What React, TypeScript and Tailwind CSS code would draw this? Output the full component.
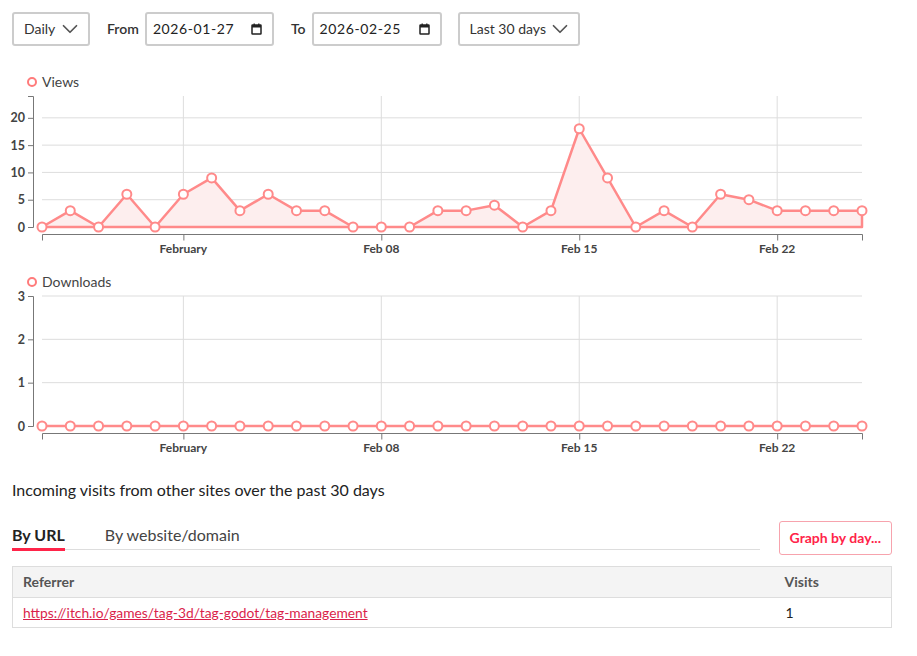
import { ChevronDown } from 'lucide-react';

const views = [0, 3, 0, 6, 0, 6, 9, 3, 6, 3, 3, 0, 0, 0, 3, 3, 4, 0, 3, 18, 9, 0, 3, 0, 6, 5, 3, 3, 3, 3];
const downloads = new Array(30).fill(0);

const xTicks = [
  { i: 5, label: 'February' },
  { i: 12, label: 'Feb 08' },
  { i: 19, label: 'Feb 15' },
  { i: 26, label: 'Feb 22' },
];

const LINE = '#ff8a8a';

function Chart({ data, max, ticks, top, bottom }: { data: number[]; max: number; ticks: number[]; top: number; bottom: number }) {
  const x0 = 42;
  const x1 = 862;
  const step = (x1 - x0) / (data.length - 1);
  const px = (i: number) => x0 + i * step;
  const py = (v: number) => bottom - (v / max) * (bottom - top);
  const axisY = bottom + 7.5;

  const pts = data.map((v, i) => `${px(i)},${py(v)}`);
  const area = `M${x0},${bottom} L${pts.join(' L')} L${x1},${bottom} Z`;

  return (
    <svg width={917} height={176} className="block -mt-[6px]">
      {/* grid */}
      {ticks.map((t) => (
        <line key={t} x1={x0} x2={x1} y1={py(t)} y2={py(t)} stroke="#dddddd" strokeWidth={1} />
      ))}
      {xTicks.map((t) => (
        <line key={t.i} x1={px(t.i)} x2={px(t.i)} y1={top} y2={bottom} stroke="#dddddd" strokeWidth={1} />
      ))}

      {/* y axis */}
      <path d={`M28,${top + 0.5} H33.5 V${bottom + 0.5} H28`} fill="none" stroke="#777" strokeWidth={1} />
      {ticks.map((t) => (
        <g key={t}>
          <line x1={28} x2={33} y1={py(t) + 0.5} y2={py(t) + 0.5} stroke="#777" />
          <text x={25} y={py(t) + 4.5} textAnchor="end" fontSize={12.5} fontWeight={700} fill="#444">
            {t}
          </text>
        </g>
      ))}

      {/* x axis */}
      <path d={`M${x0 + 0.5},${axisY + 6} V${axisY} H${x1 + 0.5} V${axisY + 6}`} fill="none" stroke="#777" strokeWidth={1} />
      {xTicks.map((t) => (
        <g key={t.i}>
          <line x1={px(t.i) + 0.5} x2={px(t.i) + 0.5} y1={axisY} y2={axisY + 6} stroke="#777" />
          <text x={px(t.i)} y={axisY + 18.5} textAnchor="middle" fontSize={12} fontWeight={700} fill="#444">
            {t.label}
          </text>
        </g>
      ))}

      {/* data */}
      <path d={area} fill="#fdeeee" stroke={LINE} strokeWidth={2.5} strokeLinejoin="round" />
      {data.map((v, i) => (
        <circle key={i} cx={px(i)} cy={py(v)} r={4.5} fill="#fff" stroke={LINE} strokeWidth={2} />
      ))}
    </svg>
  );
}

function Legend({ label }: { label: string }) {
  return (
    <div className="relative z-10 flex items-center h-[18px] pl-[27px] gap-[5px] text-sm text-[#444] leading-[18px]">
      <span className="w-[10px] h-[10px] rounded-full border-2 border-[#ff7b7b] bg-white"></span>
      <span>{label}</span>
    </div>
  );
}

function CalendarIcon() {
  return (
    <svg width="11" height="12" viewBox="0 0 11 12" className="text-[#222]">
      <rect x="1" y="2" width="9" height="9" fill="none" stroke="currentColor" strokeWidth="1.5" rx="0.5" />
      <rect x="1" y="2" width="9" height="2.5" fill="currentColor" />
      <line x1="3.2" x2="3.2" y1="0.5" y2="2.5" stroke="currentColor" strokeWidth="1.3" />
      <line x1="7.8" x2="7.8" y1="0.5" y2="2.5" stroke="currentColor" strokeWidth="1.3" />
    </svg>
  );
}

function DateBox({ value, width }: { value: string; width: string }) {
  return (
    <div className={`${width} flex items-center justify-between h-[34px] border-2 border-[#cccccc] rounded-[3px] pl-[6px] pr-[10px] text-sm text-[#222]`}>
      <span className="tracking-[0.6px]">{value}</span>
      <CalendarIcon />
    </div>
  );
}

export default function App() {
  return (
    <div className="bg-white min-h-[656px] text-[#222]" style={{ fontFamily: 'Lato, "Open Sans", sans-serif' }}>
      {/* controls */}
      <div className="flex items-center pt-3 pl-3 text-sm text-[#333]">
        <div className="flex items-center justify-between w-[78px] h-[34px] border-2 border-[#cccccc] rounded-[3px] pl-[10px] pr-[5px]">
          <span>Daily</span>
          <ChevronDown size={26} strokeWidth={1.6} className="text-[#555]" />
        </div>
        <span className="ml-[17px] mr-[6px] font-semibold text-[#333]">From</span>
        <DateBox value="2026-01-27" width="w-[129px]" />
        <span className="ml-[17px] mr-[6px] font-semibold text-[#333]">To</span>
        <DateBox value="2026-02-25" width="w-[130px]" />
        <div className="ml-4 flex items-center justify-between w-[122px] h-[34px] border-2 border-[#cccccc] rounded-[3px] pl-[10px] pr-[5px]">
          <span>Last 30 days</span>
          <ChevronDown size={26} strokeWidth={1.6} className="text-[#555]" />
        </div>
      </div>

      {/* charts */}
      <div className="mt-[27px]">
        <Legend label="Views" />
        <Chart data={views} max={24} ticks={[0, 5, 10, 15, 20]} top={11} bottom={142} />
      </div>
      <div className="mt-3">
        <Legend label="Downloads" />
        <Chart data={downloads} max={3} ticks={[0, 1, 2, 3]} top={11} bottom={141} />
      </div>

      {/* referrers */}
      <div className="pl-3 pr-[25px]">
        <p className="mt-[17px] text-base leading-6 text-[#222]">Incoming visits from other sites over the past 30 days</p>

        <div className="mt-[19px] flex items-start justify-between">
          <div className="flex w-[748px] h-[29px] border-b border-[#dddddd] text-base">
            <div className="h-[30px] border-b-[3px] border-[#ff2449] font-bold text-[#222] leading-[28px] mr-10">By URL</div>
            <div className="h-[29px] leading-[28px] text-[#444]">By website/domain</div>
          </div>
          <button className="h-[34px] px-[10px] border border-[#f7a3ad] rounded-[3px] text-sm font-bold text-[#ff2449] bg-white">
            Graph by day...
          </button>
        </div>

        <table className="mt-[11px] w-full border border-[#dddddd] border-collapse text-sm">
          <thead>
            <tr className="bg-[#f4f4f4] h-[31px]">
              <th className="text-left font-bold text-[#555] pl-[10px] border-b border-[#dddddd]">Referrer</th>
              <th className="text-left font-bold text-[#555] pl-[5px] w-[112px] border-b border-[#dddddd]">Visits</th>
            </tr>
          </thead>
          <tbody>
            <tr className="h-[30px]">
              <td className="pl-[10px]">
                <a href="#" className="text-[#da1f4b] underline text-[13.8px]">
                  https://itch.io/games/tag-3d/tag-godot/tag-management
                </a>
              </td>
              <td className="pl-[6px] text-[#222]">1</td>
            </tr>
          </tbody>
        </table>
      </div>
    </div>
  );
}
